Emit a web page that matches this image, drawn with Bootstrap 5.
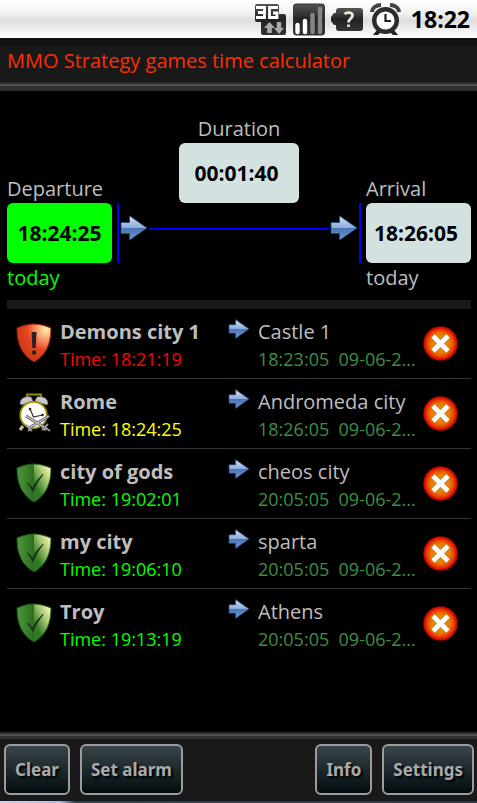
<!DOCTYPE html>
<html lang="en">
<head>
<meta charset="utf-8">
<meta name="viewport" content="width=device-width, initial-scale=1">
<title>MMO Strategy games time calculator</title>
<link href="https://cdn.jsdelivr.net/npm/bootstrap@5.3.0/dist/css/bootstrap.min.css" rel="stylesheet">
<style>
body { background: #000; color: #bebebe; font-family: "Open Sans", "Noto Sans", sans-serif; font-size: 20px; line-height: 24px; }
button { font-family: inherit; }
svg { display: block; flex-shrink: 0; }
.status { height: 38px; background: linear-gradient(#fff, #f1f1f1 35%, #dedede 55%, #f4f4f4 85%, #fff); color: #000; font-weight: 700; font-size: 23px; gap: 6px; padding-right: 7px; }
.status time { margin-left: 3px; }
.titlebar { background: linear-gradient(#101211 8px, #191919 8px); color: #ff2d00; padding: 11px 7px 9px; }
.titlebar h1 { font-size: 20px; line-height: 24px; }
.rule { height: 7px; background: linear-gradient(#2a2a2a 2px, #505050 2px 4px, #303030 4px); flex-shrink: 0; }
.rule-top { height: 9px; }
.content { padding: 28px 6px 0 7px; }
.planner { display: grid; grid-template-columns: 105px minmax(0, 1fr) 105px; grid-template-rows: 24px 36px 24px 60px 37px; line-height: 20px; }
.dur-label { grid-area: 1 / 1 / 2 / 4; justify-self: center; }
.dur-time { grid-area: 2 / 1 / 4 / 4; justify-self: center; width: 120px; }
.dep-label { grid-area: 3 / 1; }
.arr-label { grid-area: 3 / 3; }
.dep-time { grid-area: 4 / 1; }
.route { grid-area: 4 / 2; padding: 0 5px; }
.arr-time { grid-area: 4 / 3; }
.dep-day { grid-area: 5 / 1; padding-top: 5px; color: #0f0; }
.arr-day { grid-area: 5 / 3; padding-top: 5px; }
.timebox { border: 0; border-radius: 6px; background: #d3e2e1; color: #000; font-weight: 700; font-size: 21px; padding: 0 5px 0 0; }
.timebox.active { background: #0f0; padding: 0; }
.post { width: 2px; align-self: stretch; background: #00f; }
.track { height: 2px; background: #00f; flex: 1; margin-top: -8px; }
.route svg { margin: -10px 1px 0; }
.divider { height: 9px; background: #191919; }
.trip { display: grid; grid-template-columns: 53px minmax(0, 1fr) 30px 157px 56px; height: 70px; border-bottom: 1px solid #343434; padding-top: 10px; }
.trip:last-child { border-bottom: 0; }
.state { padding: 4px 0 0 9px; }
.place { font-size: 20px; line-height: 26px; }
.when { font-size: 18px; line-height: 24px; padding-top: 2px; color: #3f8f43; }
.place, .when { white-space: nowrap; }
.late { color: #f00; }
.soon { color: #ff0; }
.safe { color: #0f0; }
.remove { border: 0; background: none; padding: 0; margin: 7px 0 0 8px; width: 35px; height: 35px; }
.toolbar { background: #191919; padding: 5px 3px 6px 4px; gap: 10px; }
.tool { height: 51px; border: 2px solid #9c9c9c; border-radius: 6px; background: linear-gradient(#3a444a, #1d292d 50%, #020c0f); color: #aaa; font-family: "Noto Sans", sans-serif; font-weight: 700; font-size: 17px; padding: 0 9px; text-shadow: 2px 2px 2px #000; }
.edge { height: 2px; background: linear-gradient(90deg, #c8d4ff, #a9bdf0 60px, #32405e 75px, #33344d); }
</style>
<script src="https://cdn.jsdelivr.net/npm/bootstrap@5.3.0/dist/js/bootstrap.bundle.min.js"></script>
</head>
<body>
<svg width="0" height="0" class="position-absolute" aria-hidden="true">
  <defs>
    <linearGradient id="blue" x1="0" y1="0" x2="0" y2="1"><stop offset="0" stop-color="#d0e3f5"/><stop offset=".48" stop-color="#8caedd"/><stop offset=".52" stop-color="#5980bf"/><stop offset="1" stop-color="#7fb0e8"/></linearGradient>
    <linearGradient id="dark" x1="0" y1="0" x2="0" y2="1"><stop offset="0" stop-color="#555"/><stop offset=".5" stop-color="#222"/><stop offset="1" stop-color="#333"/></linearGradient>
    <linearGradient id="greenL" x1="0" y1="0" x2="1" y2="0"><stop offset="0" stop-color="#4c9a3c"/><stop offset="1" stop-color="#2a6d1e"/></linearGradient>
    <linearGradient id="greenR" x1=".9" y1=".05" x2=".3" y2=".75"><stop offset="0" stop-color="#fff9bd"/><stop offset=".4" stop-color="#b5cf7a"/><stop offset="1" stop-color="#2f7b22"/></linearGradient>
    <radialGradient id="red" cx=".85" cy=".15" r=".85"><stop offset="0" stop-color="#fff0a8"/><stop offset=".35" stop-color="#f8916a"/><stop offset=".65" stop-color="#e8441c"/><stop offset="1" stop-color="#cf3b18"/></radialGradient>
    <radialGradient id="orb"><stop offset="0" stop-color="#ef9a00"/><stop offset=".55" stop-color="#e67e00"/><stop offset=".75" stop-color="#e84a00"/><stop offset=".9" stop-color="#e01000"/><stop offset="1" stop-color="#960000"/></radialGradient>
    <symbol id="arrow" viewBox="0 0 27 26"><path d="M.5 7.500H9V.8L26.500 13 9 25.200V18.500H.5z" fill="url(#blue)" stroke="#24467e" stroke-width=".8"/><path d="M1 13h24L9.500 24V18H1z" fill="#2c5498" opacity=".25"/></symbol>
    <symbol id="shield" viewBox="0 0 36 40"><path d="M18 1C12 1 6 3 1 5c0 16 5 27 17 34z" fill="url(#greenL)"/><path d="M18 1c6 0 12 2 17 4 0 16-5 27-17 34z" fill="url(#greenR)"/><path d="M18 1C12 1 6 3 1 5c0 16 5 27 17 34C30 32 35 21 35 5 30 3 24 1 18 1z" fill="none" stroke="#245c1a" stroke-width="1"/><path d="M11 20c2 1 4 3 5.500 5.500C19 20 22 16 27 11.500 22.500 17 19.500 22 17 28.500 15 25 13.500 22.500 11 20z" fill="#222e22" stroke="#222e22"/></symbol>
    <symbol id="alert" viewBox="0 0 36 40"><path d="M18 1C12 1 6 3 1 5c0 16 5 27 17 34C30 32 35 21 35 5 30 3 24 1 18 1z" fill="url(#red)" stroke="#98250d" stroke-width="1"/><path d="M15.500 9h5l-.8 16h-3.400z" fill="#232323"/><circle cx="18" cy="29.500" r="2.200" fill="#232323"/></symbol>
    <symbol id="clock" viewBox="0 0 36 40">
      <path d="M11 4V1.500h14V4" fill="none" stroke="#988914" stroke-width="1.800"/>
      <path d="M4 10C5 5 9 3 15 4l2 4-12 4zM32 10C31 5 27 3 21 4l-2 4 12 4z" fill="#c9c9c9" stroke="#777" stroke-width=".6"/>
      <path d="M7 33l-3 4M26 33l4 4" stroke="#d4c77c" stroke-width="3"/>
      <circle cx="17.500" cy="22" r="13.200" fill="#fff" stroke="#a6960c" stroke-width="1.800"/>
      <path d="M14 16l3.500 8 9-2" fill="none" stroke="#333" stroke-width="1.200"/><circle cx="14" cy="16" r="1.300" fill="#222"/><circle cx="26.500" cy="22" r="1.300" fill="#222"/>
      <path d="M10 23l21 13M33 23L13 35" stroke="#666" stroke-width="3"/><path d="M10 23l21 13M33 23L13 35" stroke="#c5c5c5" stroke-width="1.400"/>
      <path d="M26 37l6-6M34 38l-4-3M10 32l6 6M12 38l3-3" stroke="#999" stroke-width="1.800"/>
    </symbol>
    <symbol id="cross" viewBox="0 0 35 35"><circle cx="17.500" cy="17.500" r="17.300" fill="url(#orb)"/><path d="M10.500 10.500l14 14M24.500 10.500l-14 14" stroke="#777" stroke-opacity=".5" stroke-width="6"/><path d="M10 10l15 15M25 10L10 25" stroke="#fff" stroke-width="4.600"/></symbol>
  </defs>
</svg>

<div class="min-vh-100 d-flex flex-column">
  <div class="status d-flex align-items-center justify-content-end">
    <svg width="33" height="33" viewBox="0 0 33 33" aria-label="3G data" role="img">
      <path d="M3 1h20a2 2 0 0 1 2 2v8h5a2 2 0 0 1 2 2v17a2 2 0 0 1-2 2H9a2 2 0 0 1-2-2V19H3a2 2 0 0 1-2-2V3a2 2 0 0 1 2-2z" fill="url(#dark)"/>
      <path d="M2 4.500h8.500v10H2M4 9.500h6M24 4.500h-8.500v10H23V10h-4" fill="none" stroke="#fff" stroke-width="2.800"/>
      <path d="M15.500 19l5.500 6h-3.200v5h-4.600v-5H10zM25 31l-5-6h2.800v-6h4.400v6H30z" fill="#aaa"/>
    </svg>
    <svg width="32" height="33" viewBox="0 0 32 33" aria-label="Signal" role="img">
      <rect x=".5" y="1" width="31" height="31" rx="2.500" fill="url(#dark)" stroke="#333"/>
      <path d="M4.500 22v7M12 18v11" stroke="#fff" stroke-width="4.400" stroke-linecap="round"/><path d="M19.500 12v17M27 6v23" stroke="#858585" stroke-width="4.400" stroke-linecap="round"/>
    </svg>
    <svg width="32" height="33" viewBox="0 0 32 33" aria-label="Battery unknown" role="img">
      <path d="M8 5h21a3 3 0 0 1 3 3v17a3 3 0 0 1-3 3H8a3 3 0 0 1-3-3v-3H3l-3-4v-4l3-4h2V8a3 3 0 0 1 3-3z" fill="url(#dark)"/>
      <path d="M13.500 11c2-2 8-2 8 1.500 0 3-4 3-4 7M17.500 21.500V24" fill="none" stroke="#eee3d6" stroke-width="2.800"/>
    </svg>
    <svg width="33" height="33" viewBox="0 0 33 33" aria-label="Alarm set" role="img">
      <path d="M8 27l-4 5h5l3-3M25 27l4 5h-5l-3-3" fill="#222"/>
      <path d="M3 9c0-4 4-7 9-7M30 9c0-4-4-7-9-7" fill="none" stroke="#444" stroke-width="3.800"/>
      <circle cx="16.500" cy="17.500" r="11.300" fill="#fff" stroke="#2c2c2c" stroke-width="4.400"/>
      <path d="M16.500 11v7H22" fill="none" stroke="#222" stroke-width="2.200"/>
    </svg>
    <time>18:22</time>
  </div>

  <header class="titlebar"><h1 class="m-0 fw-normal">MMO Strategy games time calculator</h1></header>
  <div class="rule rule-top"></div>

  <main class="content flex-grow-1">
    <section class="planner">
      <label class="dur-label" for="duration">Duration</label>
      <button id="duration" type="button" class="timebox dur-time">00:01:40</button>
      <label class="dep-label" for="departure">Departure</label>
      <button id="departure" type="button" class="timebox active dep-time">18:24:25</button>
      <div class="route d-flex align-items-center">
        <span class="post"></span>
        <svg width="28" height="26"><use href="#arrow"/></svg>
        <span class="track"></span>
        <svg width="28" height="26"><use href="#arrow"/></svg>
        <span class="post"></span>
      </div>
      <label class="arr-label" for="arrival">Arrival</label>
      <button id="arrival" type="button" class="timebox arr-time">18:26:05</button>
      <div class="dep-day">today</div>
      <div class="arr-day">today</div>
    </section>
    <div class="divider"></div>
    <ul class="list-unstyled m-0">
      <li class="trip">
        <div class="state"><svg width="36" height="40"><use href="#alert"/></svg></div>
        <div><div class="place fw-bold">Demons city 1</div><div class="when late">Time: 18:21:19</div></div>
        <svg width="22" height="20"><use href="#arrow"/></svg>
        <div><div class="place">Castle 1</div><div class="when">18:23:05&nbsp; 09-06-2...</div></div>
        <button type="button" class="remove" aria-label="Remove Demons city 1"><svg width="35" height="35"><use href="#cross"/></svg></button>
      </li>
      <li class="trip">
        <div class="state"><svg width="36" height="40"><use href="#clock"/></svg></div>
        <div><div class="place fw-bold">Rome</div><div class="when soon">Time: 18:24:25</div></div>
        <svg width="22" height="20"><use href="#arrow"/></svg>
        <div><div class="place">Andromeda city</div><div class="when">18:26:05&nbsp; 09-06-2...</div></div>
        <button type="button" class="remove" aria-label="Remove Rome"><svg width="35" height="35"><use href="#cross"/></svg></button>
      </li>
      <li class="trip">
        <div class="state"><svg width="36" height="40"><use href="#shield"/></svg></div>
        <div><div class="place fw-bold">city of gods</div><div class="when safe">Time: 19:02:01</div></div>
        <svg width="22" height="20"><use href="#arrow"/></svg>
        <div><div class="place">cheos city</div><div class="when">20:05:05&nbsp; 09-06-2...</div></div>
        <button type="button" class="remove" aria-label="Remove city of gods"><svg width="35" height="35"><use href="#cross"/></svg></button>
      </li>
      <li class="trip">
        <div class="state"><svg width="36" height="40"><use href="#shield"/></svg></div>
        <div><div class="place fw-bold">my city</div><div class="when safe">Time: 19:06:10</div></div>
        <svg width="22" height="20"><use href="#arrow"/></svg>
        <div><div class="place">sparta</div><div class="when">20:05:05&nbsp; 09-06-2...</div></div>
        <button type="button" class="remove" aria-label="Remove my city"><svg width="35" height="35"><use href="#cross"/></svg></button>
      </li>
      <li class="trip">
        <div class="state"><svg width="36" height="40"><use href="#shield"/></svg></div>
        <div><div class="place fw-bold">Troy</div><div class="when safe">Time: 19:13:19</div></div>
        <svg width="22" height="20"><use href="#arrow"/></svg>
        <div><div class="place">Athens</div><div class="when">20:05:05&nbsp; 09-06-2...</div></div>
        <button type="button" class="remove" aria-label="Remove Troy"><svg width="35" height="35"><use href="#cross"/></svg></button>
      </li>
    </ul>
  </main>

  <div class="rule"></div>
  <footer class="toolbar d-flex">
    <button type="button" class="tool">Clear</button>
    <button type="button" class="tool">Set alarm</button>
    <button type="button" class="tool ms-auto">Info</button>
    <button type="button" class="tool">Settings</button>
  </footer>
  <div class="edge"></div>
</div>
</body>
</html>
